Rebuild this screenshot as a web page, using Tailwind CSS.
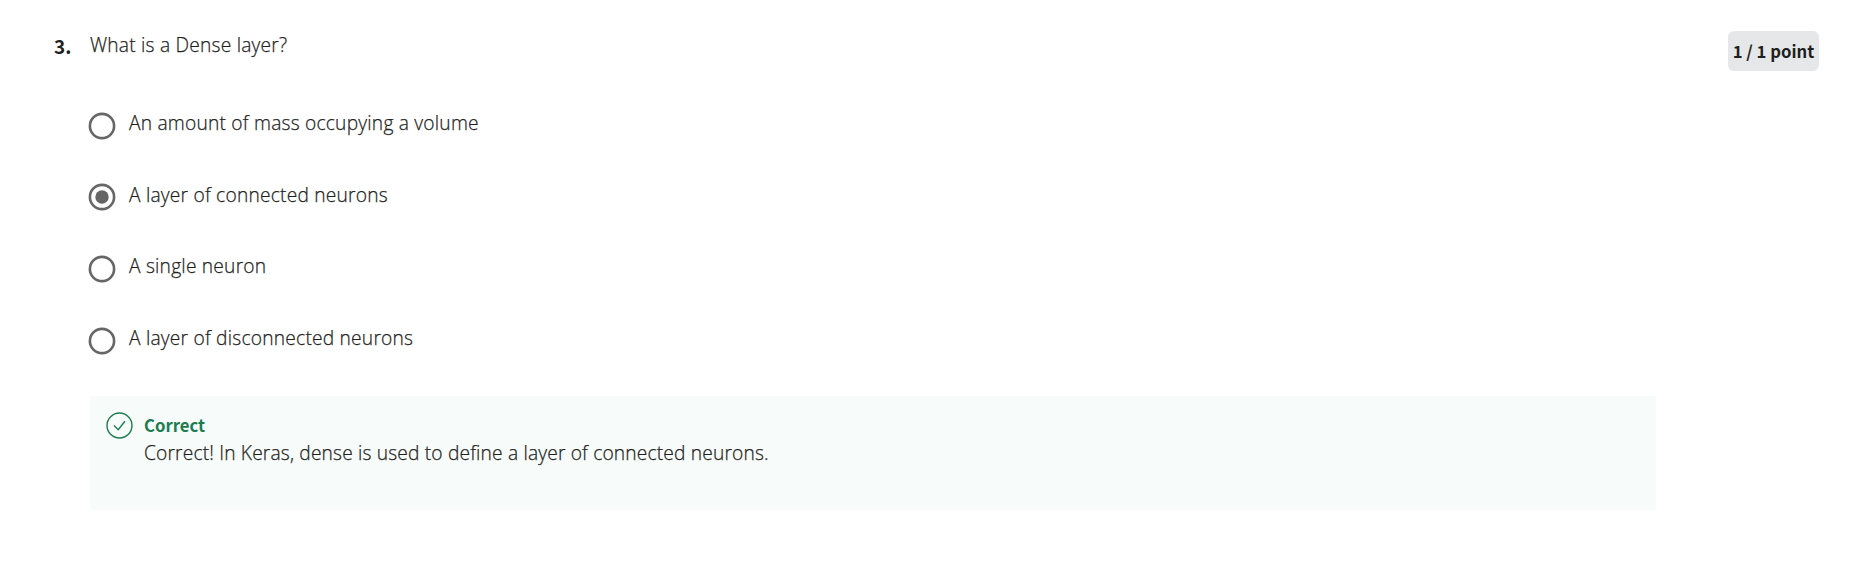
<!DOCTYPE html>
<html lang="en">
<head>
<meta charset="utf-8">
<title>Quiz question</title>
<script src="https://cdn.jsdelivr.net/npm/@tailwindcss/browser@4"></script>
</head>
<body class="bg-white font-['Open_Sans',sans-serif] font-light text-[19.2px] leading-7 tracking-[0.21px] text-[#1f1f1f]">
<main class="flex h-[579px] pl-[54px] pr-14 pt-[31px]">
  <div class="w-9 shrink-0 pt-px font-['Noto_Sans_CJK_SC',sans-serif] text-[19px] font-bold tracking-normal">3.</div>
  <section class="w-[1566px] shrink-0">
    <h1 class="w-fit whitespace-nowrap [-webkit-text-stroke:0.25px]">What is a Dense layer?</h1>
    <div class="mt-[50px] flex flex-col gap-[43.7px] [-webkit-text-stroke:0.25px]">
      <label class="flex h-7 items-start">
        <svg class="-ml-[2px] mt-[2.5px] mr-[13px] size-7 shrink-0" viewBox="0 0 28 28" fill="none"><circle cx="14" cy="14" r="12.1" stroke="#666" stroke-width="2.6"/></svg>
        <span class="whitespace-nowrap">An amount of mass occupying a volume</span>
      </label>
      <label class="flex h-7 items-start">
        <svg class="-ml-[2px] mt-[2.5px] mr-[13px] size-7 shrink-0" viewBox="0 0 28 28" fill="none"><circle cx="14" cy="14" r="12.1" stroke="#666" stroke-width="2.6"/><circle cx="14" cy="14" r="6.7" fill="#666"/></svg>
        <span class="whitespace-nowrap">A layer of connected neurons</span>
      </label>
      <label class="flex h-7 items-start">
        <svg class="-ml-[2px] mt-[2.5px] mr-[13px] size-7 shrink-0" viewBox="0 0 28 28" fill="none"><circle cx="14" cy="14" r="12.1" stroke="#666" stroke-width="2.6"/></svg>
        <span class="whitespace-nowrap">A single neuron</span>
      </label>
      <label class="flex h-7 items-start">
        <svg class="-ml-[2px] mt-[2.5px] mr-[13px] size-7 shrink-0" viewBox="0 0 28 28" fill="none"><circle cx="14" cy="14" r="12.1" stroke="#666" stroke-width="2.6"/></svg>
        <span class="whitespace-nowrap">A layer of disconnected neurons</span>
      </label>
    </div>
    <div class="mt-11 flex h-[114px] bg-[#f7fbf9] pl-4 pt-4">
      <svg class="mr-[11px] size-[27px] shrink-0" viewBox="0 0 27 27" fill="none" stroke="#1d7c50"><circle cx="13.5" cy="13.5" r="12.5" stroke-width="1.4"/><path d="M8 13.6 12.2 17.8 19 9.3" stroke-width="1.4"/></svg>
      <div class="-mt-px">
        <div class="h-7 w-fit font-['Noto_Sans_CJK_SC',sans-serif] text-[16.7px] font-bold tracking-normal text-[#1d7c50]">Correct</div>
        <p class="w-fit whitespace-nowrap tracking-[0.16px] [-webkit-text-stroke:0.25px]">Correct! In Keras, dense is used to define a layer of connected neurons.</p>
      </div>
    </div>
  </section>
  <div class="ml-auto flex h-10 w-[91px] items-center justify-center rounded-md bg-[#e5e7e8] font-['Noto_Sans_CJK_SC',sans-serif] text-[16.7px] font-bold tracking-normal whitespace-nowrap">1 / 1 point</div>
</main>
</body>
</html>
